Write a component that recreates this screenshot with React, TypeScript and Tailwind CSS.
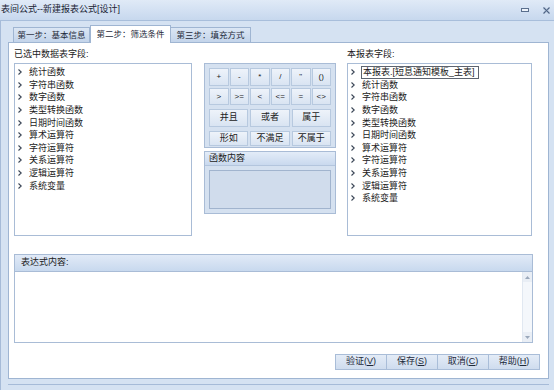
import React from "react";

const leftItems = [
  "统计函数",
  "字符串函数",
  "数字函数",
  "类型转换函数",
  "日期时间函数",
  "算术运算符",
  "字符运算符",
  "关系运算符",
  "逻辑运算符",
  "系统变量",
];

const opRow1 = ["+", "-", "*", "/", "\"", "()"];
const opRow2 = [">", ">=", "<", "<=", "=", "<>"];
const opRow3 = ["并且", "或者", "属于"];
const opRow4 = ["形如", "不满足", "不属于"];

function Chevron() {
  return (
    <svg width="4" height="6" viewBox="0 0 4 6" className="shrink-0">
      <path d="M0.5 0.5 L3.2 3 L0.5 5.5" fill="none" stroke="#3a4656" strokeWidth="1.1" />
    </svg>
  );
}

function ListRow({ label, focused }: { label: string; focused?: boolean }) {
  return (
    <div className={"flex items-center h-[12.6px] pl-[1px] " + (focused ? "gap-[6px]" : "gap-[7px]")}>
      <Chevron />
      <span
        className={
          focused
            ? "border border-[#5d6470] pl-[1px] pr-[3px] leading-[11px] h-[13px] flex items-center"
            : "leading-[12px]"
        }
      >
        {label}
      </span>
    </div>
  );
}

function OpButton({ label, className }: { label: string; className?: string }) {
  return (
    <div
      className={
        "flex items-center justify-center border border-[#b7c9df] bg-gradient-to-b from-[#eef3fa] to-[#d9e4f2] text-[#222] " +
        (className ?? "")
      }
    >
      {label}
    </div>
  );
}

function BottomButton({ text, hot }: { text: string; hot: string }) {
  return (
    <div className="w-[52px] h-[16px] flex items-center justify-center border border-[#a9bdd8] bg-gradient-to-b from-[#e4ecf7] to-[#cfdcee] text-[9px] text-[#1e2a3a] -ml-px first:ml-0">
      {text}(<span className="underline">{hot}</span>)
    </div>
  );
}

export default function App() {
  return (
    <div className="w-[554px] h-[390px] flex flex-col bg-[#d5e2f2] font-['Liberation_Sans','Noto_Sans_CJK_SC',sans-serif] text-[#1b1b1b] overflow-hidden">
      {/* 标题栏 */}
      <div className="h-[21px] shrink-0 flex items-center justify-between bg-gradient-to-b from-[#e0eaf7] to-[#c7d8ee] border-b border-[#a8bedb] pl-[1px] pr-[4px]">
        <span className="text-[9px] text-[#1a2433]">表间公式--新建报表公式[设计]</span>
        <div className="flex items-center gap-[14px]">
          <svg width="8" height="4" viewBox="0 0 8 4">
            <rect x="0.5" y="0.5" width="7" height="3" fill="#eef3fa" stroke="#5a6f8d" />
          </svg>
          <svg width="7" height="7" viewBox="0 0 7 7">
            <path d="M0.5 0.5 L6.5 6.5 M6.5 0.5 L0.5 6.5" stroke="#4e6384" strokeWidth="1.2" />
            <path d="M1.8 0.5 L6.5 5.2 M0.5 1.8 L5.2 6.5" stroke="#9fb1cb" strokeWidth="0.6" />
          </svg>
        </div>
      </div>

      {/* 主体 */}
      <div className="flex-1 flex flex-col pl-[7px] pr-[5px] border-l border-[#a6bbd8]">
        {/* 页签 */}
        <div className="h-[21px] flex items-end pl-[5px] text-[8.5px]">
          <div className="h-[15px] w-[77px] flex items-center justify-center border border-b-0 border-[#9fb5d2] bg-gradient-to-b from-[#dbe6f4] to-[#c3d4ea] text-[#1e2a3a]">
            第一步：基本信息
          </div>
          <div className="h-[18px] w-[81px] flex items-center justify-center border border-b-0 border-[#9fb5d2] bg-white -mb-px z-10 text-[#1e2a3a]">
            第二步：筛选条件
          </div>
          <div className="h-[15px] w-[80px] flex items-center justify-center border border-b-0 border-l-0 border-[#9fb5d2] bg-gradient-to-b from-[#dbe6f4] to-[#c3d4ea] text-[#1e2a3a]">
            第三步：填充方式
          </div>
        </div>

        {/* 内容面板 */}
        <div className="h-[337px] flex flex-col bg-white border border-[#9fb5d2] pl-[5px] pt-[3px] text-[9px]">
          <div className="flex">
            {/* 左侧 */}
            <div className="w-[178px] shrink-0 flex flex-col">
              <div className="h-[17px] flex items-center">已选中数据表字段:</div>
              <div className="h-[173px] border border-[#a9bcd6] pt-[2px] pl-[2px]">
                {leftItems.map((item) => (
                  <ListRow key={item} label={item} />
                ))}
              </div>
            </div>

            {/* 中间 */}
            <div className="w-[132px] shrink-0 ml-[12px] flex flex-col pt-[17px]">
              <div className="h-[85px] border border-[#a9bcd6] bg-[#d5e1f0] px-[4px] pt-[4px] flex flex-col gap-[2px] text-[8px]">
                <div className="flex gap-[1px]">
                  {opRow1.map((op) => (
                    <OpButton key={op} label={op} className="flex-1 h-[18px]" />
                  ))}
                </div>
                <div className="flex gap-[1px]">
                  {opRow2.map((op) => (
                    <OpButton key={op} label={op} className="flex-1 h-[17px]" />
                  ))}
                </div>
                <div className="flex gap-[2px] mt-[2px] text-[9px]">
                  {opRow3.map((op) => (
                    <OpButton key={op} label={op} className="flex-1 h-[18px]" />
                  ))}
                </div>
                <div className="flex gap-[2px] mt-[2px] text-[9px]">
                  {opRow4.map((op) => (
                    <OpButton key={op} label={op} className="flex-1 h-[15px]" />
                  ))}
                </div>
              </div>
              <div className="h-[63px] mt-[3px] border border-[#a9bcd6] bg-[#d5e1f0] flex flex-col">
                <div className="h-[14px] flex items-center pl-[4px] bg-gradient-to-b from-[#e3ecf8] to-[#c9d9ee] border-b border-[#b3c5dd]">
                  函数内容
                </div>
                <div className="flex-1 m-[4px] border border-[#a1b4ce] bg-[#d0dcec]" />
              </div>
            </div>

            {/* 右侧 */}
            <div className="w-[185px] shrink-0 ml-[11px] flex flex-col">
              <div className="h-[17px] flex items-center">本报表字段:</div>
              <div className="h-[173px] border border-[#a9bcd6] pt-[2px] pl-[2px]">
                <ListRow label="本报表.[短息通知模板_主表]" focused />
                {leftItems.map((item) => (
                  <ListRow key={item} label={item} />
                ))}
              </div>
            </div>
          </div>

          {/* 表达式内容 */}
          <div className="w-[519px] h-[89px] mt-[18px] border border-[#a9bcd6] flex flex-col">
            <div className="h-[17px] flex items-center pl-[6px] bg-gradient-to-b from-[#e1eaf7] to-[#c8d9ee] border-b border-[#a9bcd6]">
              表达式内容:
            </div>
            <div className="flex-1 flex justify-end">
              <div className="w-[10px] flex flex-col justify-between bg-[#f4f7fb] border-l border-[#e1e8f1]">
                <div className="h-[10px] flex items-center justify-center bg-[#e9eef5]">
                  <svg width="5" height="3" viewBox="0 0 5 3">
                    <path d="M0 3 L2.5 0 L5 3 Z" fill="#9aa8bb" />
                  </svg>
                </div>
                <div className="h-[10px] flex items-center justify-center bg-[#e9eef5]">
                  <svg width="5" height="3" viewBox="0 0 5 3">
                    <path d="M0 0 L2.5 3 L5 0 Z" fill="#9aa8bb" />
                  </svg>
                </div>
              </div>
            </div>
          </div>

          {/* 按钮 */}
          <div className="flex justify-end mt-[11px] pr-[8px]">
            <BottomButton text="验证" hot="V" />
            <BottomButton text="保存" hot="S" />
            <BottomButton text="取消" hot="C" />
            <BottomButton text="帮助" hot="H" />
          </div>
        </div>

        <div className="flex-1 border-b border-[#a6bbd8] mb-[5px]" />
      </div>
    </div>
  );
}
